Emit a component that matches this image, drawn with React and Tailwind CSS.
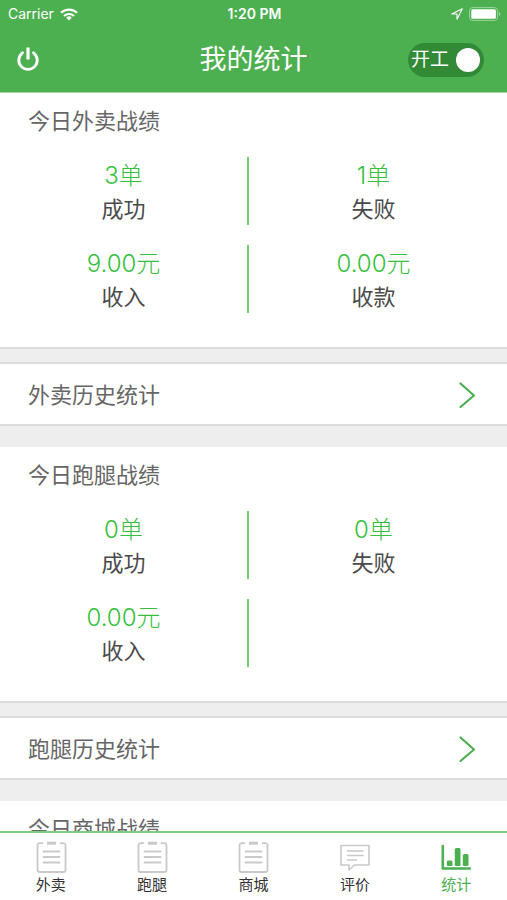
import React, { useState } from 'react';

const ClipboardIcon = () => (
    <svg viewBox="0 0 32 32" className="h-8 w-8" fill="none" stroke="#c9c9c9" strokeWidth="1.8" strokeLinecap="round" aria-hidden="true">
        <path d="M7.500 2.200H4.500a2 2 0 0 0-2 2V29a2 2 0 0 0 2 2h24a2 2 0 0 0 2-2V4.200a2 2 0 0 0-2-2h-3" />
        <path d="M12 2.200h9" strokeWidth="3" strokeLinecap="butt" />
        <path d="M8.500 10.500h16M8.500 16h16M8.500 21.500h16" />
    </svg>
);

const CommentIcon = () => (
    <svg viewBox="0 0 32 32" className="h-8 w-8" fill="none" stroke="#c9c9c9" strokeWidth="1.6" strokeLinejoin="round" strokeLinecap="round" aria-hidden="true">
        <path d="M2 4.500h28v19.500H15.500l-5.500 5v-5H2z" />
        <path d="M8.500 10h15.500M8.500 14.500h15.500M8.500 19h9" />
    </svg>
);

const ChartIcon = () => (
    <svg viewBox="0 0 32 32" className="h-8 w-8" fill="#4caf50" aria-hidden="true">
        <path d="M2.800 5v22.500h27" fill="none" stroke="#4caf50" strokeWidth="2.600" strokeLinecap="round" strokeLinejoin="round" />
        <rect x="6.800" y="19.500" width="5.700" height="5.500" rx="1.500" />
        <rect x="14.800" y="7" width="5.700" height="18" rx="1.500" />
        <rect x="22.800" y="13" width="5.700" height="12" rx="1.500" />
    </svg>
);

const PowerIcon = () => (
    <svg viewBox="0 0 24 26" className="h-[26px] w-6" fill="none" stroke="white" strokeWidth="2.800" aria-hidden="true">
        <path d="M6.500 5.800A9.200 9.200 0 1 0 17.500 5.800" strokeLinecap="round" />
        <path d="M12 0.500v12" strokeWidth="3.200" />
    </svg>
);

const sections = [
    {
        title: '今日外卖战绩',
        history: '外卖历史统计',
        stats: [
            { value: '3单', label: '成功' },
            { value: '1单', label: '失败' },
            { value: '9.00元', label: '收入' },
            { value: '0.00元', label: '收款' }
        ]
    },
    {
        title: '今日跑腿战绩',
        history: '跑腿历史统计',
        stats: [
            { value: '0单', label: '成功' },
            { value: '0单', label: '失败' },
            { value: '0.00元', label: '收入' }
        ]
    }
];

const tabs = [
    { label: '外卖', icon: <ClipboardIcon /> },
    { label: '跑腿', icon: <ClipboardIcon /> },
    { label: '商城', icon: <ClipboardIcon /> },
    { label: '评价', icon: <CommentIcon /> },
    { label: '统计', icon: <ChartIcon />, active: true }
];

const StatusBar = () => (
    <div className="grid h-7 grid-cols-3 items-center pr-1.5 pl-2 text-sm">
        <div className="flex items-center gap-1.5">
            <span>Carrier</span>
            <svg viewBox="0 0 18 13" className="h-[13px] w-[18px]" fill="none" stroke="white" strokeWidth="2.200" aria-hidden="true">
                <path d="M1 4.800a11.500 11.500 0 0 1 16 0" />
                <path d="M4 8a7.200 7.200 0 0 1 10 0" />
                <path d="M9 12.500 6.200 9.700a4 4 0 0 1 5.600 0z" fill="white" stroke="none" />
            </svg>
        </div>
        <span className="text-center font-semibold">1:20 PM</span>
        <div className="flex items-center justify-end gap-1.5">
            <svg viewBox="0 0 12 12" className="h-3 w-3" fill="none" stroke="white" strokeWidth="1.100" strokeLinejoin="round" aria-hidden="true">
                <path d="M11.300 0.700 0.700 6h5.300v5.300z" />
            </svg>
            <svg viewBox="0 0 32 14" className="h-[14px] w-8" aria-hidden="true">
                <rect x="0.600" y="0.600" width="28" height="12.800" rx="3" fill="none" stroke="#9bd49d" strokeWidth="1" />
                <rect x="2.300" y="2.300" width="24.600" height="9.400" rx="1.500" fill="white" />
                <path d="M30 5v4c1.800-.5 1.800-3.500 0-4z" fill="#9bd49d" />
            </svg>
        </div>
    </div>
);

const StatSection = ({ title, stats, history }) => (
    <>
        <section className="border-b-2 border-[#dcdcdc] bg-white pb-[34px]">
            <h2 className="px-7 pt-3 pb-5 text-[22px] leading-8 text-[#666]">{title}</h2>
            <div className="grid grid-cols-2 gap-y-5 pr-[9px]">
                {stats.map(({ value, label }, index) => (
                    <div
                        key={index}
                        className={`flex h-[68px] flex-col items-center ${index % 2 === 0 ? 'border-r-2 border-[#6fcf73]' : ''}`}
                    >
                        <span className="text-2xl leading-[38px] font-light text-[#36bf3c]">{value}</span>
                        <span className="text-[22px] leading-7 text-[#4a4a4a]">{label}</span>
                    </div>
                ))}
            </div>
        </section>
        <a href="#" className="mt-[13px] mb-[21px] flex h-16 items-center justify-between border-y-2 border-[#dcdcdc] bg-white pt-0.5 pr-8 pl-7">
            <span className="text-[22px] text-[#666]">{history}</span>
            <svg viewBox="0 0 16 26" className="h-[26px] w-4" fill="none" stroke="#4caf50" strokeWidth="2.200" strokeLinecap="round" aria-hidden="true">
                <path d="M1.500 1.500 15 13.500 1.500 25" />
            </svg>
        </a>
    </>
);

const App = () => {
    const [working, setWorking] = useState(true);

    return (
        <div className="flex h-screen flex-col bg-[#eeeeee] font-[Inter,'Noto_Sans_CJK_SC',sans-serif]">
            <header className="shrink-0 border-b border-[#a5d8a7] bg-[#4caf50] text-white">
                <StatusBar />
                <div className="grid h-16 grid-cols-3 items-center px-4">
                    <button type="button" aria-label="退出" className="w-6">
                        <PowerIcon />
                    </button>
                    <h1 className="text-center text-[27px]">我的统计</h1>
                    <label className="mr-[7px] flex h-[34px] w-[76px] cursor-pointer items-center justify-between justify-self-end rounded-full bg-[#338a36] pr-1 pl-[3px]">
                        <span className="text-[19px]">开工</span>
                        <input
                            type="checkbox"
                            role="switch"
                            checked={working}
                            onChange={() => setWorking(!working)}
                            className="h-6 w-6 cursor-pointer appearance-none rounded-full bg-white/50 checked:bg-white"
                        />
                    </label>
                </div>
            </header>

            <main className="min-h-0 flex-1 overflow-y-auto [scrollbar-width:none]">
                {sections.map((section) => (
                    <StatSection key={section.title} {...section} />
                ))}
                <section className="bg-white">
                    <h2 className="px-7 pt-3 pb-5 text-[22px] leading-8 text-[#666]">今日商城战绩</h2>
                </section>
            </main>

            <nav className="grid shrink-0 grid-cols-5 border-t-2 border-[#7fcb82] bg-white">
                {tabs.map(({ label, icon, active }) => (
                    <a key={label} href="#" className={`flex flex-col items-center pt-2 pb-[3px] ${active ? 'text-[#4caf50]' : 'text-[#333]'}`}>
                        {icon}
                        <span className="text-[15px] leading-6">{label}</span>
                    </a>
                ))}
            </nav>
        </div>
    );
};

export default App;
